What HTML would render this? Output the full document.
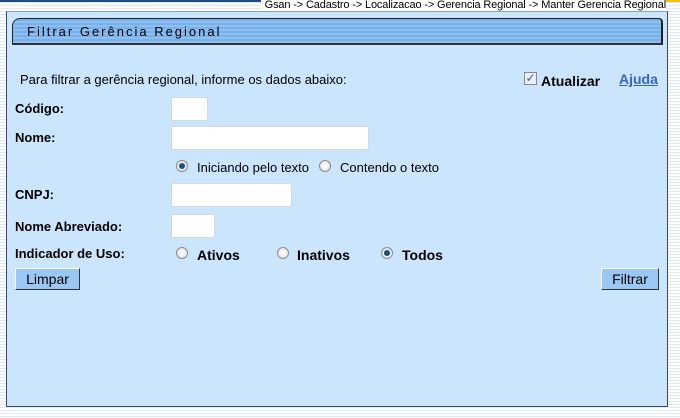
<!DOCTYPE html>
<html><head><meta charset="utf-8"><style>
*{margin:0;padding:0;box-sizing:border-box}
body{width:680px;height:418px;overflow:hidden;position:relative;font-family:"Liberation Sans",Arial,sans-serif;font-size:13px;color:#000;
background:repeating-linear-gradient(#fff 0 2px,#dbe9f8 2px 3px);}
.topl{position:absolute;left:0;top:0;width:680px;height:2px;background:#1f4a80}
.yel{position:absolute;left:330px;top:0;width:350px;height:2px;background:#f5c000}
.crumb{position:absolute;right:14px;top:0;font-size:11px;line-height:11px;background:#fff;padding-left:4px;white-space:nowrap;color:#000;letter-spacing:-0.15px}
.panel{position:absolute;left:6px;top:11px;width:662px;height:396px;background:#cbe5fd;border:1px solid #3a4a5a;border-top:1px solid #8aa}
.title{position:absolute;left:12px;top:18px;width:651px;height:27px;border:1px solid #222;border-top-left-radius:8px;border-top-right-radius:4px;
background:repeating-linear-gradient(#7ab0ea 0 2px,#8cc0f3 2px 4px);border-right:2px solid #222;border-bottom:2px solid #333}
.title span{position:absolute;left:14px;top:5px;font-size:13px;letter-spacing:2px;color:#000}
.t{position:absolute;white-space:nowrap}
.b{font-weight:bold}
.in{position:absolute;background:#fff;border:1px solid #d0d8e0;border-radius:2px}
.r{position:absolute;width:12px;height:12px;border-radius:50%;border:1px solid #8a8a8a;background:radial-gradient(#fff,#ddd)}
.r.on::after{content:"";position:absolute;left:2px;top:2px;width:6px;height:6px;border-radius:50%;background:#1a4f7c}
.btn{position:absolute;height:22px;background:#99c8f5;border:1px solid #333;border-top-color:#fff;border-left-color:#fff;font-size:14px;text-align:center;line-height:20px}
</style></head><body>
<div class="topl"></div><div class="yel"></div>
<div class="crumb">Gsan -&gt; Cadastro -&gt; Localizacao -&gt; Gerencia Regional -&gt; Manter Gerencia Regional</div>
<div class="panel"></div>
<div class="title"><span>Filtrar Gerência Regional</span></div>
<div class="t" style="left:20px;top:72px">Para filtrar a gerência regional, informe os dados abaixo:</div>
<div style="position:absolute;left:524px;top:72px;width:13px;height:13px;border:1px solid #888;background:#e8eef4;color:#3a5a9a;font-size:12px;line-height:11px;text-align:center">✓</div>
<div class="t b" style="left:541px;top:73px;font-size:14px">Atualizar</div>
<div class="t b" style="left:619px;top:71px;font-size:14px;color:#3566c8;text-decoration:underline">Ajuda</div>
<div class="t b" style="left:15px;top:101px">Código:</div>
<div class="in" style="left:171px;top:97px;width:37px;height:24px"></div>
<div class="t b" style="left:15px;top:130px">Nome:</div>
<div class="in" style="left:171px;top:126px;width:198px;height:24px"></div>
<div class="r on" style="left:176px;top:160px"></div>
<div class="t" style="left:197px;top:160px">Iniciando pelo texto</div>
<div class="r" style="left:319px;top:160px"></div>
<div class="t" style="left:340px;top:160px">Contendo o texto</div>
<div class="t b" style="left:15px;top:187px">CNPJ:</div>
<div class="in" style="left:171px;top:183px;width:121px;height:24px"></div>
<div class="t b" style="left:15px;top:219px">Nome Abreviado:</div>
<div class="in" style="left:171px;top:214px;width:44px;height:24px"></div>
<div class="t b" style="left:15px;top:246px">Indicador de Uso:</div>
<div class="r" style="left:176px;top:247px"></div>
<div class="t b" style="left:197px;top:247px;font-size:14px">Ativos</div>
<div class="r" style="left:277px;top:247px"></div>
<div class="t b" style="left:297px;top:247px;font-size:14px">Inativos</div>
<div class="r on" style="left:381px;top:247px"></div>
<div class="t b" style="left:402px;top:247px;font-size:14px">Todos</div>
<div class="btn" style="left:15px;top:268px;width:65px">Limpar</div>
<div class="btn" style="left:601px;top:268px;width:58px">Filtrar</div>
</body></html>
